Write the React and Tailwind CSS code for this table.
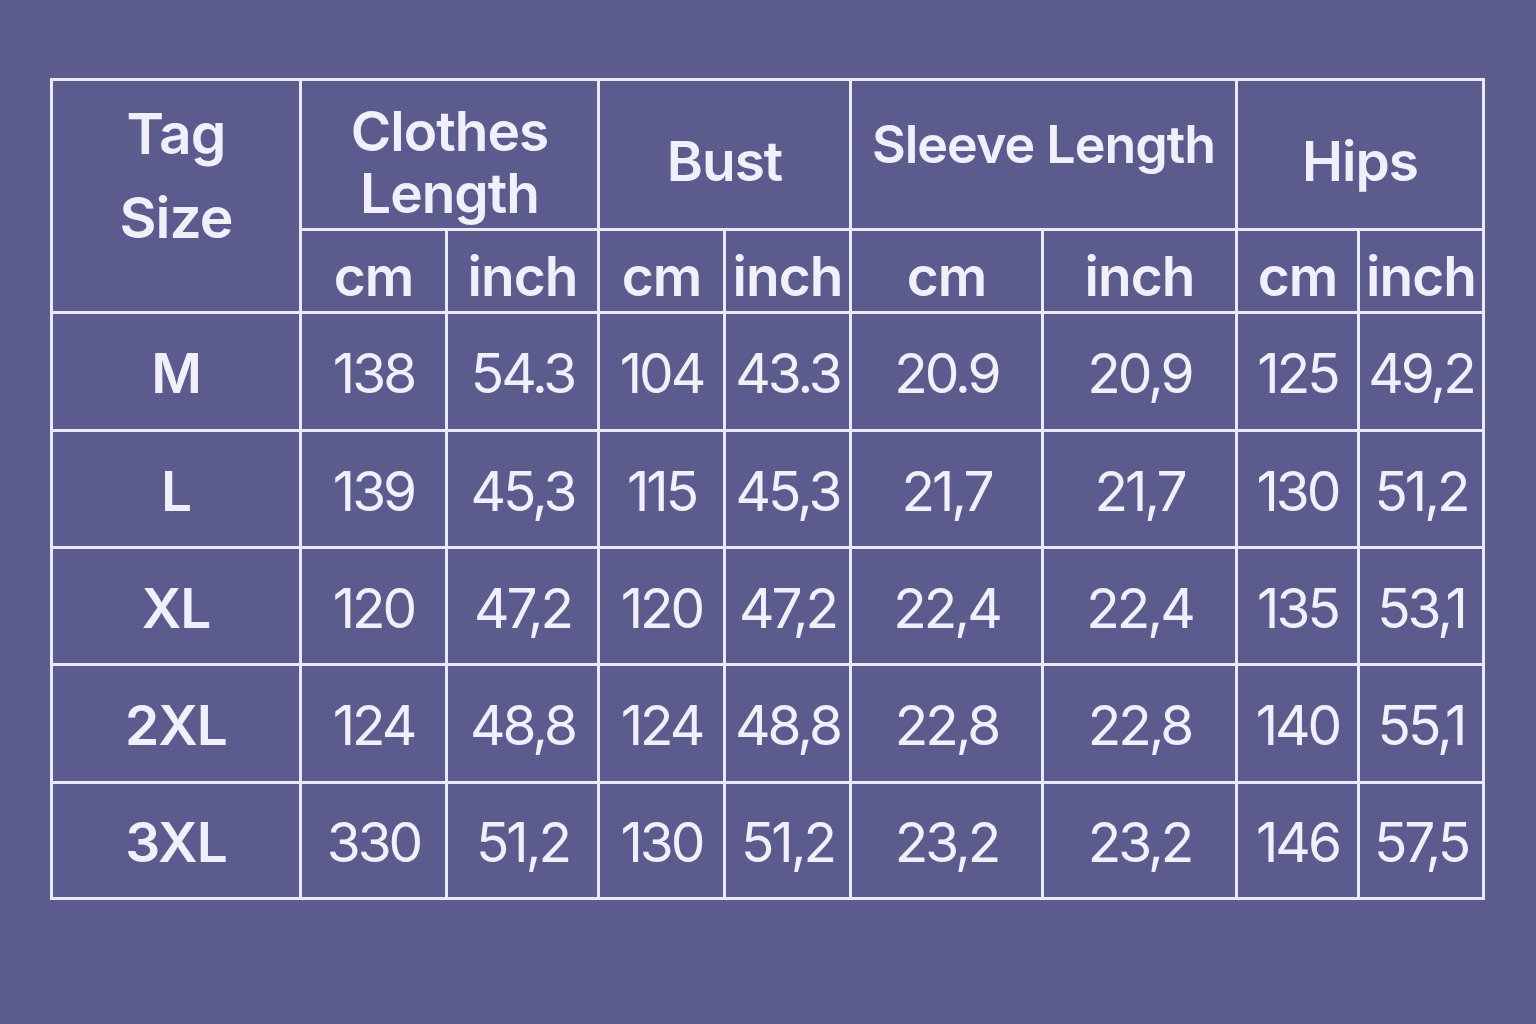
import React from 'react';

const rows = [
  ['M', '138', '54.3', '104', '43.3', '20.9', '20,9', '125', '49,2'],
  ['L', '139', '45,3', '115', '45,3', '21,7', '21,7', '130', '51,2'],
  ['XL', '120', '47,2', '120', '47,2', '22,4', '22,4', '135', '53,1'],
  ['2XL', '124', '48,8', '124', '48,8', '22,8', '22,8', '140', '55,1'],
  ['3XL', '330', '51,2', '130', '51,2', '23,2', '23,2', '146', '57,5'],
];

const widths = [249, 146, 152, 126, 126, 192, 194, 122, 125];
const rowHeights = [118, 117, 117, 118, 116];

const cell = 'border-[3px] border-[#e9e9f7] text-center align-middle p-0';

export default function App() {
  return (
    <div
      className="w-full h-[1024px] bg-[#5c5b8d] pl-[50px] pt-[78px] text-[#eff0fb]"
      style={{ fontFamily: 'Inter, "Noto Sans", sans-serif' }}
    >
      <table className="table-fixed border-collapse w-[1435px]">
        <colgroup>
          {widths.map((w, i) => (
            <col key={i} style={{ width: w }} />
          ))}
        </colgroup>
        <thead>
          <tr className="h-[150px]">
            <th rowSpan={2} className={`${cell} pb-[40px] font-semibold text-[57px] leading-[84px] tracking-[-1px]`}>
              Tag
              <br />
              Size
            </th>
            <th colSpan={2} className={`${cell} pt-[14px] font-semibold text-[55px] leading-[62px] tracking-[-1px]`}>
              <div>Clothes</div>
              <div>Length</div>
            </th>
            <th colSpan={2} className={`${cell} pt-[14px] font-semibold text-[55px] tracking-[-1px]`}>
              Bust
            </th>
            <th colSpan={2} className={`${cell} font-semibold text-[52px] tracking-[-1px]`}>
              <div className="-mt-[20px]">Sleeve Length</div>
            </th>
            <th colSpan={2} className={`${cell} pt-[14px] font-semibold text-[55px] tracking-[-1px]`}>
              Hips
            </th>
          </tr>
          <tr className="h-[83px]">
            {['cm', 'inch', 'cm', 'inch', 'cm', 'inch', 'cm', 'inch'].map((u, i) => (
              <th key={i} className={`${cell} pt-[10px] font-semibold text-[55px] tracking-[-1px] leading-none`}>
                {u}
              </th>
            ))}
          </tr>
        </thead>
        <tbody>
          {rows.map((r, ri) => (
            <tr key={ri} style={{ height: rowHeights[ri] }}>
              {r.map((v, ci) =>
                ci === 0 ? (
                  <td key={ci} className={`${cell} pt-[4px] font-semibold text-[55px] tracking-[-1px]`}>
                    {v}
                  </td>
                ) : (
                  <td key={ci} className={`${cell} pt-[4px] font-normal text-[55px] tracking-[-3px] leading-none`}>
                    {v}
                  </td>
                )
              )}
            </tr>
          ))}
        </tbody>
      </table>
    </div>
  );
}
